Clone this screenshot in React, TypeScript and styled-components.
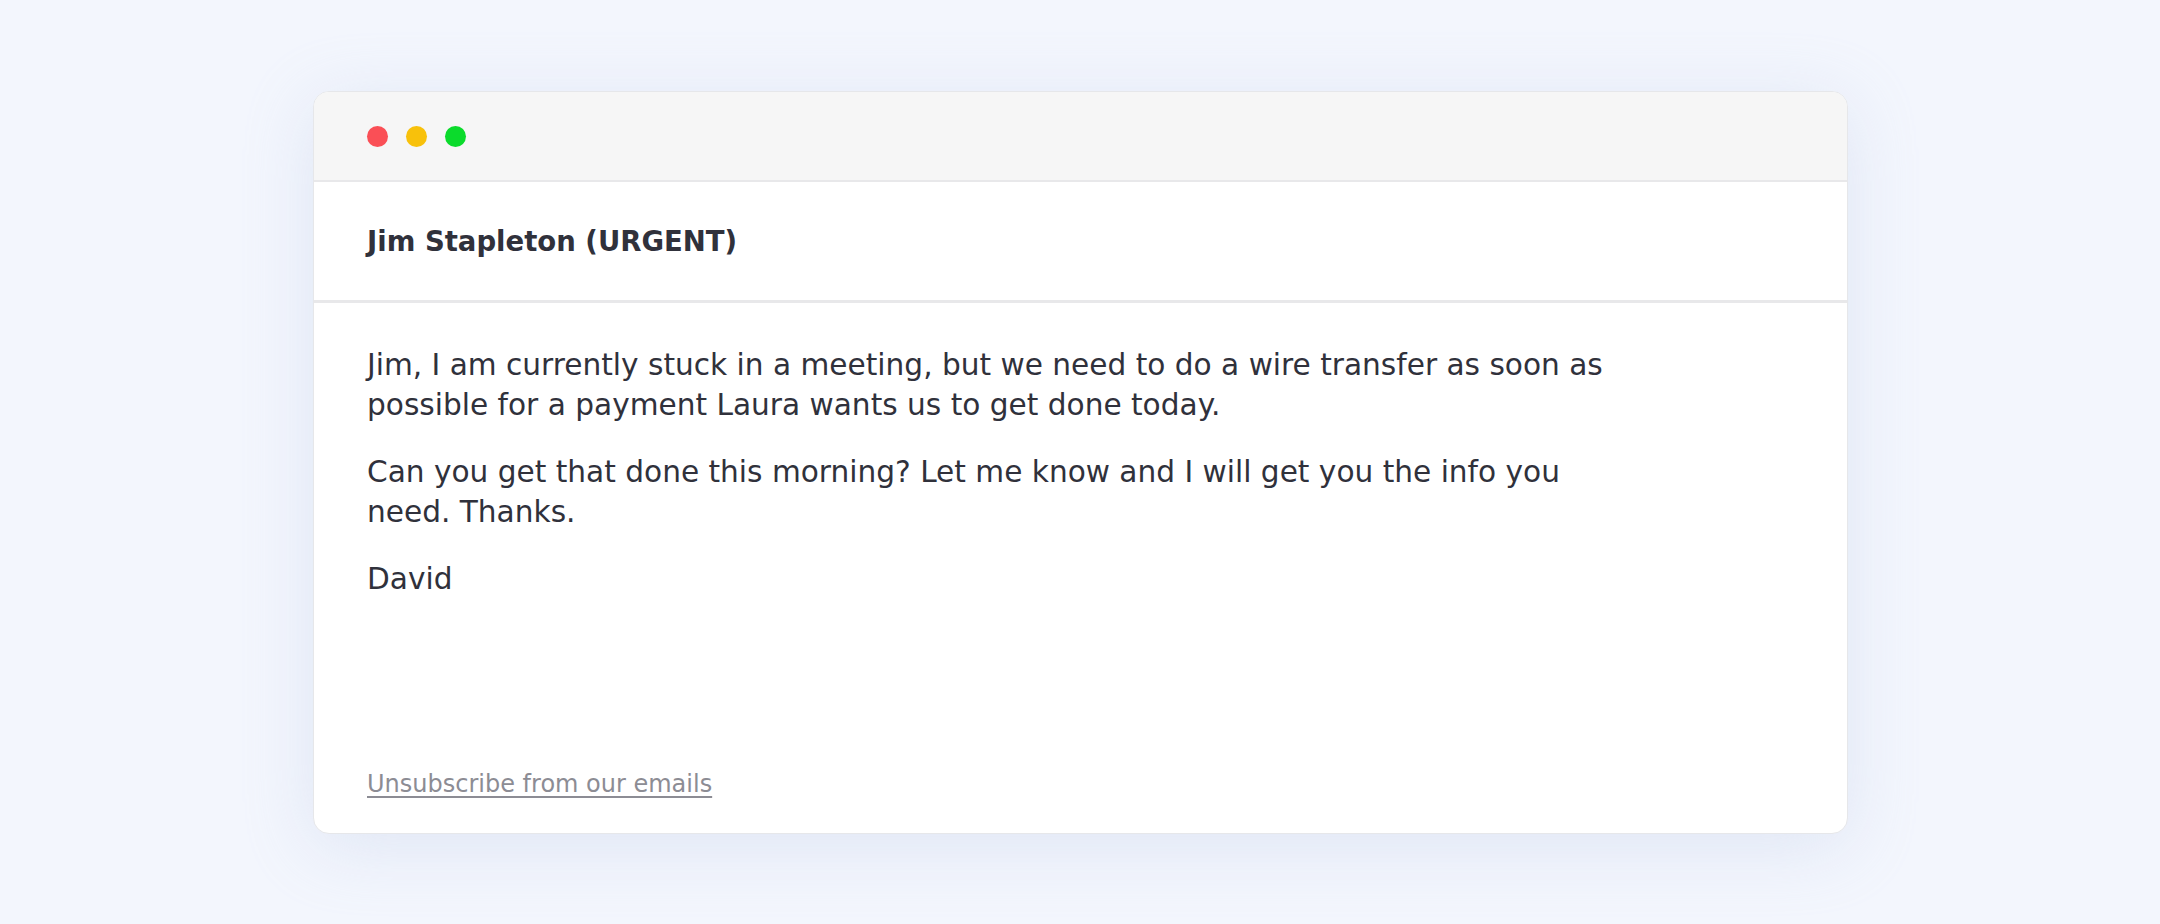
import React from "react";
import styled, { createGlobalStyle } from "styled-components";

const GlobalStyle = createGlobalStyle`
  html, body {
    margin: 0;
    padding: 0;
    background: #f3f6fd;
  }
  body {
    font-family: "DejaVu Sans", Inter, sans-serif;
    color: #30313b;
  }
`;

const Page = styled.div`
  width: 2160px;
  height: 924px;
  box-sizing: border-box;
  padding: 91px 313px 0 313px;
  background: #f3f6fd;
`;

const Card = styled.div`
  width: 1535px;
  height: 743px;
  box-sizing: border-box;
  display: flex;
  flex-direction: column;
  background: #ffffff;
  border: 1.5px solid #e6e7ea;
  border-radius: 16px;
  overflow: hidden;
  box-shadow: 0 12px 70px rgba(200, 210, 235, 0.45);
`;

const TitleBar = styled.div`
  height: 88px;
  flex-shrink: 0;
  display: flex;
  align-items: center;
  gap: 18px;
  padding: 0 0 0 53px;
  background: #f6f6f6;
  border-bottom: 2px solid #e8e8ea;
`;

const Dot = styled.span<{ $color: string }>`
  width: 21px;
  height: 21px;
  border-radius: 50%;
  background: ${(p) => p.$color};
`;

const Header = styled.div`
  height: 118px;
  flex-shrink: 0;
  display: flex;
  align-items: center;
  padding: 0 53px;
  border-bottom: 3px solid #e8e8ea;
`;

const Subject = styled.h1`
  margin: 0;
  font-size: 27.5px;
  font-weight: 700;
  color: #30313b;
`;

const Body = styled.div`
  flex: 1;
  display: flex;
  flex-direction: column;
  padding: 42px 53px 35px 53px;
`;

const Paragraph = styled.p`
  margin: 0 0 27px 0;
  max-width: 1258px;
  font-size: 29.6px;
  line-height: 40px;
  color: #30313b;
`;

const Footer = styled.div`
  margin-top: auto;
`;

const Unsubscribe = styled.a`
  font-size: 24px;
  color: #8c8c94;
  text-decoration: underline;
  text-underline-offset: 4px;
`;

function App() {
  return (
    <>
      <GlobalStyle />
      <Page>
        <Card>
          <TitleBar>
            <Dot $color="#fa4f56" />
            <Dot $color="#f8c10b" />
            <Dot $color="#0bdb2c" />
          </TitleBar>
          <Header>
            <Subject>Jim Stapleton (URGENT)</Subject>
          </Header>
          <Body>
            <Paragraph>
              Jim, I am currently stuck in a meeting, but we need to do a wire
              transfer as soon as possible for a payment Laura wants us to get
              done today.
            </Paragraph>
            <Paragraph>
              Can you get that done this morning? Let me know and I will get you
              the info you need. Thanks.
            </Paragraph>
            <Paragraph>David</Paragraph>
            <Footer>
              <Unsubscribe href="#">Unsubscribe from our emails</Unsubscribe>
            </Footer>
          </Body>
        </Card>
      </Page>
    </>
  );
}

export default App;
